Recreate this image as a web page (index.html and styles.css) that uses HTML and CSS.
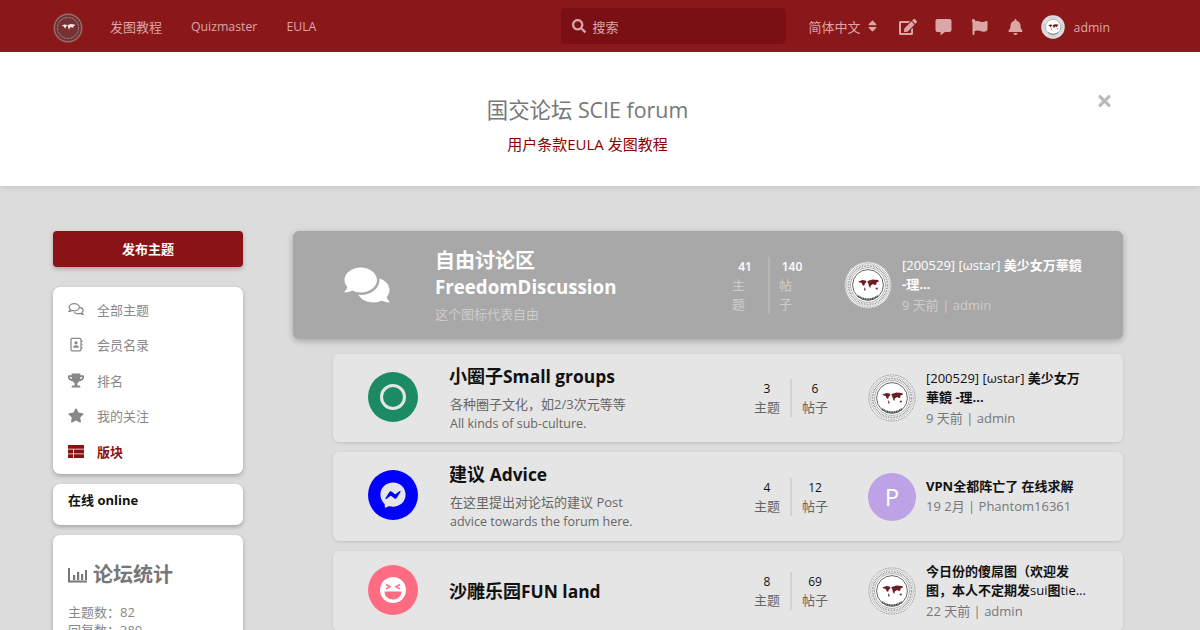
FILE: index.html
```html
<!DOCTYPE html>
<html lang="zh-CN">
<head>
<meta charset="utf-8">
<title>国交论坛 SCIE forum</title>
<link rel="stylesheet" href="styles.css">
</head>
<body>
<svg class="defs" xmlns="http://www.w3.org/2000/svg">
  <symbol id="seal" viewBox="0 0 48 48">
    <circle cx="24" cy="24" r="23.5" fill="#fff"/>
    <circle cx="24" cy="24" r="23" fill="none" stroke="#858585" stroke-width="1" stroke-dasharray="1.200 .5"/>
    <circle cx="24" cy="24" r="21.4" fill="none" stroke="#999" stroke-width=".6"/>
    <circle cx="24" cy="24" r="19.4" fill="none" stroke="#8c8c8c" stroke-width="2" stroke-dasharray=".8 .8"/>
    <circle cx="24" cy="24" r="17.4" fill="none" stroke="#888" stroke-width=".7"/>
    <circle cx="24" cy="24" r="15.4" fill="none" stroke="#666" stroke-width="1"/>
    <path d="M14.500 20.500l4-1.500 3 .5 1 1.500-1.500 1.500-1 2.500-1.500-1-.8-2-3.200-1zM23.500 20l5-1.500 5.500.5 1.200 1.500-2.500.8-.5 2.500-1.500.3-1.500-1.100-2.500 1.500-.4 2.500-1.200-1.500-.8-3-.8-1.500z" fill="#6b1f24"/>
    <path d="M31.500 27l2-.4.4 1.600-1.600.4zM20.500 26l1.200 2.500-.8 1.500-.8-1.500z" fill="#6b1f24"/>
    <path d="M14 35q10 6.500 20 0" fill="none" stroke="#444" stroke-width="1.800" stroke-dasharray="1.300 .5"/>
  </symbol>
  <symbol id="brandmark" viewBox="0 0 30 30">
    <circle cx="15" cy="15" r="14.500" fill="#9a6a6b"/>
    <circle cx="15" cy="15" r="13" fill="#6f3335"/>
    <circle cx="15" cy="15" r="10.500" fill="none" stroke="#a98283" stroke-width="1.200" stroke-dasharray=".8 .6"/>
    <circle cx="15" cy="15" r="8.500" fill="#7a2f31"/>
    <path d="M8.500 12.500l3-1 2 .3.600 1-1 1-.7 1.700-1-.7-.5-1.300zM14.500 12l3.500-1 3.500.4.800 1-1.700.5-.3 1.700-1 .2-1-.7-1.700 1-.3 1.700-.8-1-.5-2-.5-1z" fill="#f0e6e6"/>
  </symbol>
  <symbol id="i-search" viewBox="0 0 512 512"><path d="M505 442.700L405.300 343c-4.500-4.500-10.600-7-17-7H372c27.600-35.300 44-79.700 44-128C416 93.100 322.900 0 208 0S0 93.100 0 208s93.100 208 208 208c48.300 0 92.700-16.400 128-44v16.300c0 6.400 2.500 12.500 7 17l99.700 99.700c9.400 9.400 24.600 9.400 33.900 0l28.300-28.300c9.400-9.400 9.400-24.600.1-34zM208 336c-70.700 0-128-57.200-128-128 0-70.700 57.200-128 128-128 70.700 0 128 57.200 128 128 0 70.700-57.200 128-128 128z"/></symbol>
  <symbol id="i-sort" viewBox="0 0 320 512"><path d="M41 288h238c21.400 0 32.100 25.900 17 41L177 448c-9.400 9.400-24.600 9.400-33.900 0L24 329c-15.100-15.100-4.400-41 17-41zm255-105L177 64c-9.400-9.400-24.600-9.400-33.900 0L24 183c-15.100 15.100-4.400 41 17 41h238c21.400 0 32.100-25.900 17-41z"/></symbol>
  <symbol id="i-edit" viewBox="0 0 576 512"><path d="M402.600 83.200l90.200 90.200c3.800 3.800 3.800 10 0 13.800L274.400 405.600l-92.800 10.300c-12.400 1.400-22.900-9.100-21.500-21.500l10.300-92.800L388.800 83.200c3.800-3.800 10-3.800 13.800 0zm162-22.900l-48.800-48.800c-15.200-15.200-39.900-15.200-55.200 0l-35.400 35.400c-3.800 3.800-3.800 10 0 13.800l90.200 90.200c3.800 3.800 10 3.800 13.800 0l35.400-35.400c15.200-15.300 15.200-40 0-55.200zM384 346.200V448H64V128h229.800c3.200 0 6.200-1.300 8.500-3.500l40-40c7.600-7.600 2.200-20.500-8.500-20.500H48C21.500 64 0 85.500 0 112v352c0 26.500 21.500 48 48 48h352c26.500 0 48-21.500 48-48V306.200c0-10.700-12.900-16-20.500-8.500l-40 40c-2.200 2.300-3.500 5.300-3.500 8.500z"/></symbol>
  <symbol id="i-comment" viewBox="0 0 512 512"><path d="M448 0H64C28.700 0 0 28.700 0 64v288c0 35.300 28.700 64 64 64h96v84c0 9.800 11.200 15.500 19.100 9.700L304 416h144c35.300 0 64-28.700 64-64V64c0-35.300-28.700-64-64-64z"/></symbol>
  <symbol id="i-flag" viewBox="0 0 512 512"><path d="M349.565 98.783C295.978 98.783 251.721 64 184.348 64c-24.955 0-47.309 4.384-68.045 12.013a55.947 55.947 0 0 0 3.586-23.562C118.117 24.015 94.806 1.206 66.338.048 34.345-1.254 8 24.296 8 56c0 19.026 9.497 35.825 24 45.945V488c0 13.255 10.745 24 24 24h16c13.255 0 24-10.745 24-24v-94.400c28.311-12.064 63.582-22.122 114.435-22.122 53.588 0 97.844 34.783 165.217 34.783 48.169 0 86.667-16.294 122.505-40.858C506.840 359.452 512 349.571 512 339.045v-243.100c0-23.393-24.269-38.870-45.485-29.016-34.338 15.948-76.454 31.854-116.950 31.854z"/></symbol>
  <symbol id="i-bell" viewBox="0 0 448 512"><path d="M224 512c35.320 0 63.970-28.650 63.970-64H160.030c0 35.350 28.650 64 63.970 64zm215.390-149.710c-19.320-20.760-55.470-51.990-55.470-154.290 0-77.700-54.480-139.900-127.940-155.160V32c0-17.670-14.320-32-31.980-32s-31.980 14.330-31.980 32v20.840C118.560 68.100 64.080 130.300 64.080 208c0 102.300-36.150 133.530-55.470 154.290-6 6.450-8.660 14.160-8.610 21.710.11 16.400 12.980 32 32.100 32h383.800c19.120 0 32-15.600 32.100-32 .05-7.550-2.610-15.270-8.610-21.710z"/></symbol>
  <symbol id="i-times" viewBox="0 0 352 512"><path d="M242.720 256l100.070-100.070c12.280-12.280 12.280-32.190 0-44.480l-22.240-22.240c-12.280-12.280-32.190-12.280-44.480 0L176 189.280 75.930 89.210c-12.280-12.280-32.190-12.280-44.480 0L9.210 111.450c-12.280 12.280-12.280 32.190 0 44.480L109.280 256 9.210 356.070c-12.280 12.280-12.280 32.190 0 44.480l22.240 22.240c12.280 12.280 32.200 12.280 44.480 0L176 322.720l100.070 100.070c12.280 12.280 32.200 12.280 44.480 0l22.240-22.240c12.280-12.280 12.280-32.190 0-44.480L242.720 256z"/></symbol>
  <symbol id="i-comments" viewBox="0 0 576 512"><path d="M416 192c0-88.400-93.100-160-208-160S0 103.600 0 192c0 34.300 14.100 65.900 38 92-13.400 30.200-35.500 54.200-35.800 54.500-2.200 2.300-2.800 5.700-1.500 8.700S4.800 352 8 352c36.600 0 66.900-12.300 88.700-25 32.200 15.700 70.300 25 111.300 25 114.900 0 208-71.600 208-160zm122 220c23.900-26 38-57.700 38-92 0-66.900-53.500-124.200-129.300-148.100.9 6.600 1.300 13.300 1.300 20.100 0 105.900-107.700 192-240 192-10.800 0-21.300-.8-31.700-1.900C207.800 439.600 281.800 480 368 480c41 0 79.100-9.200 111.300-25 21.800 12.700 52.100 25 88.700 25 3.200 0 6.100-1.900 7.300-4.800 1.300-2.900.7-6.300-1.500-8.700-.3-.3-22.400-24.200-35.800-54.500z"/></symbol>
  <symbol id="i-star" viewBox="0 0 576 512"><path d="M259.300 17.800L194 150.200 47.900 171.500c-26.200 3.800-36.700 36.100-17.700 54.600l105.700 103-25 145.500c-4.500 26.300 23.200 46 46.400 33.700L288 439.600l130.700 68.700c23.200 12.200 50.900-7.400 46.400-33.700l-25-145.500 105.700-103c19-18.500 8.500-50.800-17.700-54.600L382 150.200 316.700 17.800c-11.700-23.600-45.600-23.900-57.400 0z"/></symbol>
  <symbol id="i-trophy" viewBox="0 0 576 512"><path d="M552 64H448V24c0-13.300-10.700-24-24-24H152c-13.300 0-24 10.700-24 24v40H24C10.700 64 0 74.700 0 88v56c0 35.700 22.500 72.400 61.900 100.700 31.500 22.700 69.800 37.100 110 41.700C203.300 338.500 240 360 240 360v72h-48c-35.300 0-64 20.700-64 56v12c0 6.600 5.400 12 12 12h296c6.600 0 12-5.400 12-12v-12c0-35.300-28.700-56-64-56h-48v-72s36.700-21.500 68.100-73.600c40.300-4.600 78.600-19 110-41.700 39.300-28.300 61.900-65 61.900-100.700V88c0-13.300-10.700-24-24-24zM99.300 192.800C74.900 175.200 64 155.600 64 144v-16h64.200c1 32.600 5.800 61.200 12.800 86.200-15.100-5.200-29.200-12.400-41.700-21.400zM512 144c0 16.100-17.700 36.100-35.300 48.800-12.500 9-26.700 16.200-41.800 21.400 7-25 11.800-53.600 12.800-86.200H512v16z"/></symbol>
  <symbol id="i-messenger" viewBox="0 0 512 512"><path d="M256.550 8C116.520 8 8 110.340 8 248.570c0 72.300 29.710 134.780 78.070 177.940 8.350 7.510 6.630 11.860 8.050 58.230A19.920 19.920 0 0 0 122 502.310c52.910-23.300 53.590-25.140 62.560-22.700C337.850 521.800 504 423.700 504 248.570 504 110.340 396.590 8 256.550 8zm149.240 185.130l-73 115.570a37.370 37.370 0 0 1-53.910 9.930l-58.080-43.470a15 15 0 0 0-18 0l-78.370 59.440c-10.460 7.930-24.160-4.600-17.110-15.670l73-115.570a37.360 37.360 0 0 1 53.910-9.930l58.060 43.460a15 15 0 0 0 18 0l78.410-59.380c10.440-7.980 24.140 4.540 17.090 15.620z"/></symbol>
</svg>

<header class="topbar">
  <svg class="brand"><use href="#brandmark"/></svg>
  <nav class="mainnav">
    <a>发图教程</a>
    <a class="nav-latin">Quizmaster</a>
    <a class="nav-latin">EULA</a>
  </nav>
  <div class="search">
    <svg class="ico-search"><use href="#i-search"/></svg>
    <span>搜索</span>
  </div>
  <div class="lang">简体中文 <svg class="ico-sort"><use href="#i-sort"/></svg></div>
  <svg class="tb-icon tb-edit"><use href="#i-edit"/></svg>
  <svg class="tb-icon tb-comment"><use href="#i-comment"/></svg>
  <svg class="tb-icon tb-flag"><use href="#i-flag"/></svg>
  <svg class="tb-icon tb-bell"><use href="#i-bell"/></svg>
  <svg class="tb-avatar"><use href="#seal"/></svg>
  <span class="tb-user">admin</span>
</header>

<section class="hero">
  <svg class="hero-close"><use href="#i-times"/></svg>
  <h1>国交论坛 SCIE forum</h1>
  <p>用户条款EULA 发图教程</p>
</section>

<div class="layout">
  <aside class="side">
    <button class="post-btn">发布主题</button>
    <ul class="card side-menu">
      <li>
        <svg class="m-ico" viewBox="0 0 18 16"><g fill="none" stroke="currentColor" stroke-width="1.400"><path d="M7 1.500c-3.200 0-5.700 1.800-5.700 4 0 1 .5 1.900 1.300 2.600-.3.8-.8 1.500-1.200 1.900 1.200 0 2.300-.5 3-1 .8.300 1.700.5 2.600.5 3.200 0 5.700-1.800 5.700-4s-2.500-4-5.700-4z"/><path d="M13.600 5.600c2 .5 3.300 1.800 3.300 3.300 0 1-.5 1.800-1.300 2.500.2.800.7 1.500 1.200 2-1.300 0-2.300-.5-3-1-.8.300-1.700.5-2.600.5-1.800 0-3.400-.7-4.300-1.700"/></g></svg>
        全部主题
      </li>
      <li>
        <svg class="m-ico" viewBox="0 0 18 18"><rect x="3" y="1.500" width="12" height="15" rx="1.500" fill="none" stroke="currentColor" stroke-width="1.500"/><circle cx="9" cy="7" r="2" fill="currentColor"/><path d="M5.500 13c0-2 1.500-3 3.500-3s3.500 1 3.500 3z" fill="currentColor"/><path d="M16 4v2M16 8v2M16 12v2" stroke="currentColor" stroke-width="1.500"/></svg>
        会员名录
      </li>
      <li><svg class="m-ico"><use href="#i-trophy"/></svg>排名</li>
      <li><svg class="m-ico"><use href="#i-star"/></svg>我的关注</li>
      <li class="active">
        <svg class="m-ico" viewBox="0 0 16 13"><path d="M0 0h16v3.800H0zM0 4.600h5v3.800H0zM5.800 4.600H16v3.800H5.800zM0 9.200h5V13H0zM5.800 9.200H16V13H5.800z" fill="currentColor"/></svg>
        版块
      </li>
    </ul>
    <div class="card online">在线 online</div>
    <div class="card stats-card">
      <h3>
        <svg class="chart" viewBox="0 0 20 16"><path d="M1 1v13.500h18" fill="none" stroke="currentColor" stroke-width="2"/><path d="M5 8h2.200v5H5zM9 5h2.200v8H9zM13 7h2.200v6H13zM17 3h2v10h-2z" fill="currentColor"/></svg>
        论坛统计
      </h3>
      <p>主题数：82</p>
      <p>回复数：380</p>
    </div>
  </aside>

  <main class="forums">
    <article class="row row-featured">
      <div class="row-icon"><svg class="bubbles"><use href="#i-comments"/></svg></div>
      <div class="row-main">
        <h2 class="feat-cn">自由讨论区</h2>
        <h2 class="feat-en">FreedomDiscussion</h2>
        <p>这个图标代表自由</p>
      </div>
      <div class="stats">
        <div class="stat"><b>41</b><span>主题</span></div>
        <div class="stat"><b>140</b><span>帖子</span></div>
      </div>
      <div class="last">
        <svg class="avatar"><use href="#seal"/></svg>
        <div class="last-text">
          <div class="last-title"><i>[200529] [ωstar]</i> 美少女万華鏡<br>-理...</div>
          <div class="last-meta">9 天前 | admin</div>
        </div>
      </div>
    </article>

    <article class="row">
      <div class="row-icon"><span class="disc disc-green"><span class="ring"></span></span></div>
      <div class="row-main">
        <h2>小圈子<span class="en">Small groups</span></h2>
        <p>各种圈子文化，如2/3次元等等<br><span class="en">All kinds of sub-culture.</span></p>
      </div>
      <div class="stats">
        <div class="stat"><b>3</b><span>主题</span></div>
        <div class="stat"><b>6</b><span>帖子</span></div>
      </div>
      <div class="last">
        <svg class="avatar"><use href="#seal"/></svg>
        <div class="last-text">
          <div class="last-title"><i>[200529] [ωstar]</i> 美少女万<br>華鏡 -理...</div>
          <div class="last-meta">9 天前 | admin</div>
        </div>
      </div>
    </article>

    <article class="row row-tall">
      <div class="row-icon"><span class="disc disc-blue"><svg class="disc-svg"><use href="#i-messenger"/></svg></span></div>
      <div class="row-main">
        <h2>建议 <span class="en">Advice</span></h2>
        <p>在这里提出对论坛的建议 Post<br><span class="en">advice towards the forum here.</span></p>
      </div>
      <div class="stats">
        <div class="stat"><b>4</b><span>主题</span></div>
        <div class="stat"><b>12</b><span>帖子</span></div>
      </div>
      <div class="last">
        <span class="avatar letter">P</span>
        <div class="last-text">
          <div class="last-title">VPN全都阵亡了 在线求解</div>
          <div class="last-meta">19 2月 | Phantom16361</div>
        </div>
      </div>
    </article>

    <article class="row row-short">
      <div class="row-icon">
        <span class="disc disc-pink">
          <svg class="disc-svg" viewBox="0 0 26 26"><circle cx="13" cy="13" r="13" fill="#fff"/><path d="M6 7.500l4 2.200-4 2.200M20 7.500l-4 2.200 4 2.200" fill="none" stroke="#ff6b81" stroke-width="1.500"/><path d="M4.500 14.500h17c0 4.500-3.800 8-8.500 8s-8.500-3.500-8.500-8z" fill="#ff6b81"/></svg>
        </span>
      </div>
      <div class="row-main"><h2>沙雕乐园<span class="en">FUN land</span></h2></div>
      <div class="stats">
        <div class="stat"><b>8</b><span>主题</span></div>
        <div class="stat"><b>69</b><span>帖子</span></div>
      </div>
      <div class="last">
        <svg class="avatar"><use href="#seal"/></svg>
        <div class="last-text">
          <div class="last-title">今日份的傻屌图（欢迎发<br>图，本人不定期发<i>sui</i>图<i>tie...</i></div>
          <div class="last-meta">22 天前 | admin</div>
        </div>
      </div>
    </article>
  </main>
</div>
</body>
</html>
```

FILE: styles.css
```css
* { box-sizing: border-box; }
html, body { margin: 0; height: 630px; overflow: hidden; }
body {
  background: #dcdcdc;
  font-family: "Open Sans", "Noto Sans CJK SC", sans-serif;
  font-size: 13px;
  color: #777;
}
.defs { display: none; }
h1, h2, h3, p, ul { margin: 0; padding: 0; }
ul { list-style: none; }

.topbar {
  height: 52px;
  background: #8a181b;
  color: #dca6a6;
  display: flex;
  align-items: center;
  padding: 2px 90px 0 53px;
  position: relative;
  z-index: 2;
}
.brand { width: 30px; height: 30px; flex: none; margin-top: 2px; }
.mainnav { display: flex; gap: 29px; margin: -2px 0 0 27px; flex: 1; align-items: center; }
.nav-latin { font-size: 12.300px; }
.search {
  width: 225px;
  height: 36px;
  background: #7a1014;
  border-radius: 4px;
  display: flex;
  align-items: center;
  padding-left: 11px;
  gap: 7px;
  margin-right: 23px;
  margin-top: -2px;
  fill: #dca6a6;
}
.ico-search { width: 14px; height: 14px; }
.lang { display: flex; align-items: center; gap: 7px; width: 90px; margin-top: -2px; fill: #dca6a6; }
.ico-sort { width: 9px; height: 14px; }
.tb-icon { fill: #dca6a6; height: 16px; flex: none; }
.tb-edit { width: 18px; margin-right: 18px; }
.tb-comment { width: 17px; margin-right: 19px; }
.tb-flag { width: 17px; margin-right: 20px; }
.tb-bell { width: 15px; margin-right: 18px; }
.tb-avatar { width: 24px; height: 24px; flex: none; }
.tb-user { margin-left: 9px; font-size: 12.300px; }

.hero {
  height: 134px;
  background: #fff;
  box-shadow: 0 1px 6px rgba(0,0,0,.12);
  padding: 43px 25px 0 0;
  text-align: center;
  position: relative;
}
.hero h1 { font-size: 21.400px; font-weight: 400; line-height: 30px; color: #777; }
.hero p { font-size: 15px; line-height: 20px; margin-top: 9px; color: #8b0000; }
.hero-close { position: absolute; left: 1098px; top: 40px; width: 13px; height: 18px; fill: #bbb; }

.layout {
  display: flex;
  gap: 50px;
  padding: 45px 77px 0 53px;
}
.side { width: 190px; flex: none; }
.post-btn {
  display: block;
  width: 100%;
  height: 36px;
  border: 0;
  border-radius: 4px;
  padding: 0 0 2px;
  background: #8a1317;
  color: #fff;
  font: 700 13px "Open Sans", "Noto Sans CJK SC", sans-serif;
  box-shadow: 0 2px 4px rgba(0,0,0,.25);
  margin-bottom: 20px;
}
.card {
  background: #fff;
  border-radius: 7px;
  box-shadow: 0 2px 4px rgba(0,0,0,.25);
  margin-bottom: 10px;
}
.side-menu { height: 187px; padding: 4.500px 15px; }
.side-menu li {
  height: 35.500px;
  display: flex;
  align-items: center;
  gap: 13px;
  color: #888;
}
.side-menu li.active { color: #8b1014; font-weight: 700; }
.m-ico { width: 16px; height: 15px; flex: none; fill: currentColor; }
.online { height: 41px; padding: 5px 15px; font-weight: 700; color: #111; line-height: 22px; }
.stats-card { padding: 24px 15px; height: 200px; }
.stats-card h3 { font-size: 20px; font-weight: 700; color: #777; display: flex; align-items: center; gap: 5px; line-height: 32px; }
.chart { width: 20px; height: 16px; }
.stats-card p { line-height: 18px; color: #888; }
.stats-card h3 + p { margin-top: 12px; }

.forums { flex: 1; min-width: 0; padding-left: 40px; }
.row {
  display: grid;
  grid-template-columns: 116px 305px 114px 1fr;
  align-items: center;
  min-height: 88px;
  margin-bottom: 10px;
  background: #e5e5e5;
  border-radius: 6px;
  box-shadow: 0 1px 3px rgba(0,0,0,.12);
}
.row-tall { min-height: 89px; }
.row-short { min-height: 80px; }
.row-icon { display: flex; justify-content: center; padding-left: 4px; }
.row h2 { font-size: 18px; font-weight: 700; line-height: 24px; color: #111; }
.row h2 .en { font-size: 17.400px; }
.row-main p { font-size: 13px; line-height: 19px; margin-top: 7px; color: #666; padding-left: 1px; }
.row-main p .en { font-size: 12.500px; }
.disc { width: 50px; height: 50px; border-radius: 50%; display: flex; align-items: center; justify-content: center; margin-bottom: 3px; }
.disc-green { background: #1c8a63; }
.disc-blue { background: #0000ff; fill: #e5e5e5; }
.disc-pink { background: #ff6b81; }
.ring { width: 26px; height: 26px; border: 3px solid #e5e5e5; border-radius: 50%; }
.disc-svg { width: 26px; height: 26px; }
.stats { display: flex; }
.stat { display: flex; flex-direction: column; align-items: center; line-height: 19px; width: 26px; color: #666; }
.stat b { font-size: 12px; font-weight: 500; color: #111; }
.stat:first-child { box-sizing: content-box; padding-right: 10px; border-right: 2px solid #d2d2d2; margin-right: 10px; }
.last { display: flex; align-items: center; gap: 10px; }
.avatar { width: 48px; height: 48px; flex: none; }
.letter {
  border-radius: 50%;
  background: #bda3e6;
  color: #fff;
  font-size: 24px;
  display: flex;
  align-items: center;
  justify-content: center;
}
.last-title { font-size: 13px; font-weight: 700; line-height: 19.500px; color: #111; white-space: nowrap; }
.last-title i { font-style: normal; font-weight: 400; }
.last-meta { font-size: 13px; line-height: 20px; color: #777; }

.row-featured {
  grid-template-columns: 142px 297px 112px 1fr;
  min-height: 108px;
  margin: 0 0 15px -40px;
  background: #a8a8a8;
  color: #fff;
  box-shadow: 0 2px 6px rgba(0,0,0,.25);
}
.row-featured .row-icon { padding-left: 6px; }
.bubbles { width: 46px; height: 40px; fill: #fff; }
.row-featured h2 { color: #fff; }
.row-featured .feat-cn { font-size: 20px; line-height: 28px; padding-top: 1px; }
.row-featured .feat-en { font-size: 18.700px; line-height: 24px; }
.row-featured .row-main p { color: #ccc; margin-top: 5px; line-height: 20px; padding-left: 0; }
.row-featured .stat { color: #ccc; }
.row-featured .stat:first-child { margin-right: 9px; border-right-color: #b6b6b6; }
.row-featured .stat b { color: #fff; font-weight: 600; }
.row-featured .stat span { width: 14px; align-self: flex-start; }
.row-featured .last-title { color: #fff; }
.row-featured .last-meta { color: #ccc; }
```
